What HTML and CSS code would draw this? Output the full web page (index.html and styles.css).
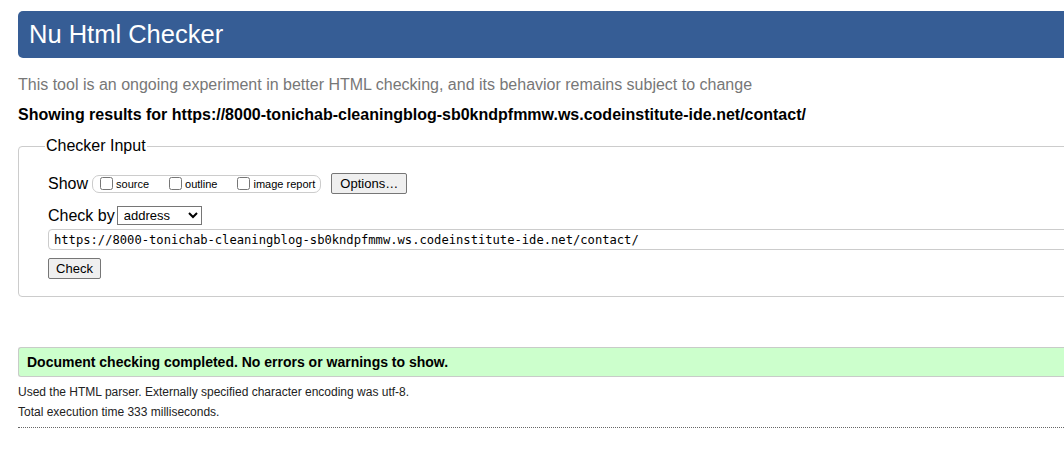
FILE: index.html
```html
<!DOCTYPE html>
<html>
<head>
<meta charset="utf-8">
<title>Nu Html Checker</title>
<link rel="stylesheet" href="styles.css">
</head>
<body>
<div class="page">
  <h1 class="banner">Nu Html Checker</h1>
  <p class="intro">This tool is an ongoing experiment in better HTML checking, and its behavior remains subject to change</p>
  <p class="showing">Showing results for https://8000-tonichab-cleaningblog-sb0kndpfmmw.ws.codeinstitute-ide.net/contact/</p>
  <fieldset class="checker">
    <legend class="legend">Checker Input</legend>
    <div class="row show-row">
      <span class="lbl">Show</span>
      <span class="opts">
        <label class="opt"><input type="checkbox" class="cb">source</label>
        <label class="opt"><input type="checkbox" class="cb">outline</label>
        <label class="opt"><input type="checkbox" class="cb">image report</label>
      </span>
      <button class="btn options-btn" type="button">Options…</button>
    </div>
    <div class="row by-row">
      <span class="lbl">Check by</span>
      <select class="sel"><option>address</option></select>
    </div>
    <input class="url" type="text" value="https://8000-tonichab-cleaningblog-sb0kndpfmmw.ws.codeinstitute-ide.net/contact/">
    <div class="row check-row">
      <button class="btn check-btn" type="button">Check</button>
    </div>
  </fieldset>
  <div class="success">Document checking completed. No errors or warnings to show.</div>
  <p class="meta">Used the HTML parser. Externally specified character encoding was utf-8.</p>
  <p class="meta">Total execution time 333 milliseconds.</p>
  <hr class="rule">
</div>
</body>
</html>
```

FILE: styles.css
```css
html, body {
  margin: 0;
  padding: 0;
  overflow: hidden;
  background: #fff;
}
body {
  font-family: "Liberation Sans", Arial, sans-serif;
  color: #000;
}
.page {
  width: 1300px;
  padding: 11px 0 0 18px;
  box-sizing: border-box;
}
.banner {
  margin: 0;
  height: 47px;
  line-height: 47px;
  padding-left: 11px;
  background: #365d95;
  color: #fff;
  font-size: 25.5px;
  font-weight: normal;
  border-radius: 5px;
}
.intro {
  margin: 18px 0 0;
  font-size: 16px;
  line-height: 18px;
  color: #777;
}
.showing {
  margin: 12px 0 0;
  font-size: 16px;
  line-height: 18px;
  font-weight: bold;
}
.checker {
  margin: 13px 0 0;
  padding: 10px 29px 17px;
  border: 1px solid #ccc;
  border-radius: 4px;
}
.legend {
  font-size: 16px;
  padding: 0 1px;
  margin-left: -3px;
}
.row {
  display: flex;
  align-items: center;
}
.lbl {
  font-size: 16px;
}
.show-row {
  margin-top: 8px;
}
.opts {
  display: inline-flex;
  align-items: center;
  height: 16px;
  margin-left: 4px;
  padding: 0 5px 0 5px;
  border: 1px solid #ccc;
  border-radius: 7px;
  font-size: 11px;
}
.opt {
  display: inline-flex;
  align-items: center;
  margin-right: 18px;
}
.opt:last-child {
  margin-right: 0;
}
.cb {
  margin: 0 3px 0 2px;
  width: 13px;
  height: 13px;
}
.btn {
  font-family: "Liberation Sans", Arial, sans-serif;
  font-size: 13px;
  background: #efefef;
  border: 1px solid #767676;
  border-radius: 2px;
  color: #000;
  padding: 0 6px;
  height: 21px;
}
.options-btn {
  margin-left: 10px;
  width: 76px;
}
.by-row {
  margin-top: 12px;
}
.sel {
  margin-left: 2px;
  height: 19px;
  width: 85px;
  font-family: "Liberation Sans", Arial, sans-serif;
  font-size: 13px;
  border: 1px solid #767676;
  border-radius: 0;
  background: #fff;
  padding: 0 0 0 2px;
}
.url {
  display: block;
  margin-top: 4px;
  width: 1200px;
  height: 21px;
  box-sizing: border-box;
  border: 1px solid #ccc;
  border-radius: 4px;
  padding: 0 5px;
  font-family: "DejaVu Sans Mono", "Liberation Mono", monospace;
  font-size: 12.15px;
  color: #000;
}
.check-row {
  margin-top: 8px;
}
.check-btn {
  width: 53px;
}
.success {
  margin-top: 50px;
  height: 28px;
  line-height: 28px;
  padding-left: 8px;
  background: #ccffcc;
  border: 1px solid #c8ccc8;
  border-right: none;
  border-radius: 3px 0 0 3px;
  font-size: 14px;
  font-weight: bold;
}
.meta {
  margin: 8px 0 0;
  font-size: 12px;
  line-height: 14px;
  color: #222;
}
.meta + .meta {
  margin-top: 6px;
}
.rule {
  margin: 8px 0 0;
  border: none;
  border-top: 1px dotted #666;
  height: 0;
}
```
